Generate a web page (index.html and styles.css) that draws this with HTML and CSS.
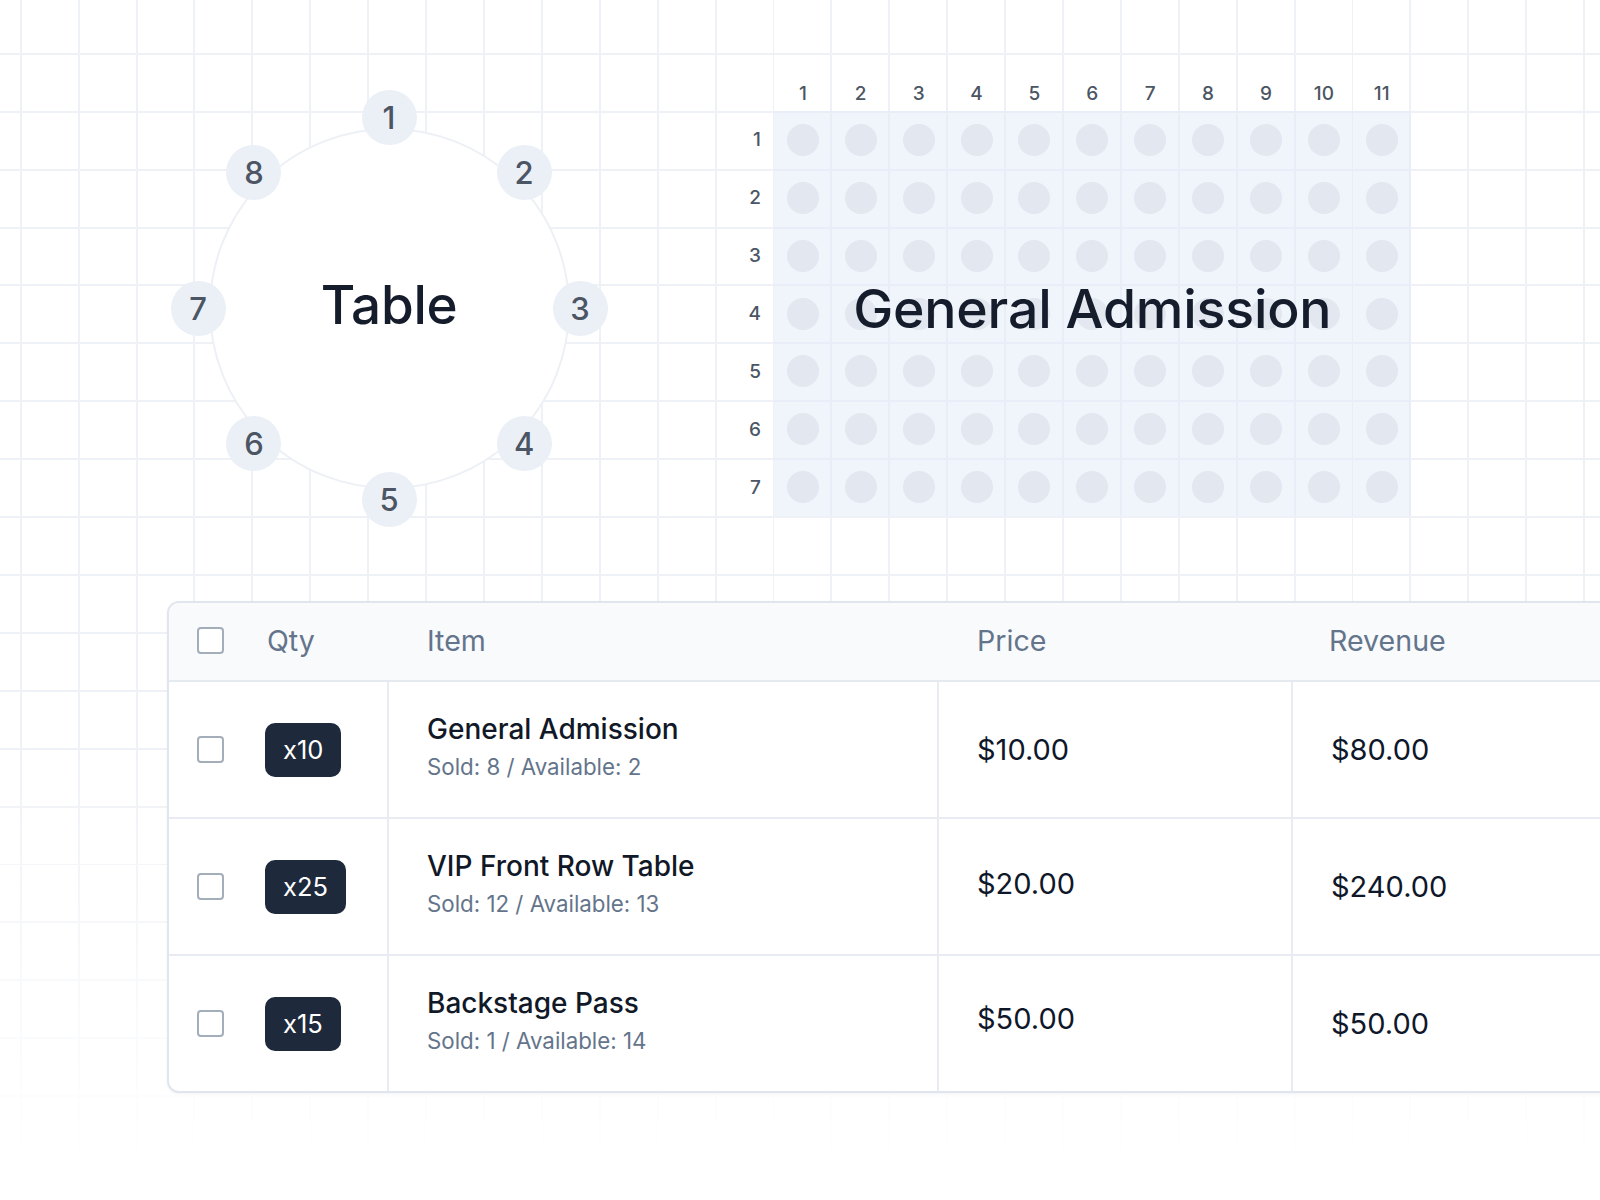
FILE: index.html
```html
<!DOCTYPE html>
<html lang="en">
<head>
<meta charset="utf-8">
<title>Seating & Orders</title>
<link rel="stylesheet" href="styles.css">
</head>
<body>
<div class="canvas">
  <div class="grid-bg"></div>
  <section class="top">
    <div class="round">
      <div class="round-table">Table</div>
      <span class="seat s1">1</span>
      <span class="seat s2">2</span>
      <span class="seat s3">3</span>
      <span class="seat s4">4</span>
      <span class="seat s5">5</span>
      <span class="seat s6">6</span>
      <span class="seat s7">7</span>
      <span class="seat s8">8</span>
    </div>

    <div class="seatmap">
      <div class="cols">
        <span>1</span><span>2</span><span>3</span><span>4</span><span>5</span><span>6</span><span>7</span><span>8</span><span>9</span><span>10</span><span>11</span>
      </div>
      <div class="map-body">
        <div class="rows">
          <span>1</span><span>2</span><span>3</span><span>4</span><span>5</span><span>6</span><span>7</span>
        </div>
        <div class="seats">
          <i></i><i></i><i></i><i></i><i></i><i></i><i></i><i></i><i></i><i></i><i></i>
          <i></i><i></i><i></i><i></i><i></i><i></i><i></i><i></i><i></i><i></i><i></i>
          <i></i><i></i><i></i><i></i><i></i><i></i><i></i><i></i><i></i><i></i><i></i>
          <i></i><i></i><i></i><i></i><i></i><i></i><i></i><i></i><i></i><i></i><i></i>
          <i></i><i></i><i></i><i></i><i></i><i></i><i></i><i></i><i></i><i></i><i></i>
          <i></i><i></i><i></i><i></i><i></i><i></i><i></i><i></i><i></i><i></i><i></i>
          <i></i><i></i><i></i><i></i><i></i><i></i><i></i><i></i><i></i><i></i><i></i>
          <div class="zone-label">General Admission</div>
        </div>
      </div>
    </div>
  </section>

  <section class="orders">
    <div class="orders-head">
      <div class="cell cell-qty"><span class="cb"></span><span>Qty</span></div>
      <div class="cell cell-text">Item</div>
      <div class="cell cell-text">Price</div>
      <div class="cell cell-text head-rev">Revenue</div>
    </div>

    <div class="orders-row">
      <div class="cell cell-qty"><span class="cb"></span><span class="badge">x10</span></div>
      <div class="cell cell-text cell-item">
        <div class="item-name">General Admission</div>
        <div class="item-sub">Sold: 8 / Available: 2</div>
      </div>
      <div class="cell cell-text money">$10.00</div>
      <div class="cell cell-text money">$80.00</div>
    </div>

    <div class="orders-row">
      <div class="cell cell-qty"><span class="cb"></span><span class="badge">x25</span></div>
      <div class="cell cell-text cell-item">
        <div class="item-name">VIP Front Row Table</div>
        <div class="item-sub">Sold: 12 / Available: 13</div>
      </div>
      <div class="cell cell-text money lift-sm">$20.00</div>
      <div class="cell cell-text money">$240.00</div>
    </div>

    <div class="orders-row">
      <div class="cell cell-qty"><span class="cb"></span><span class="badge">x15</span></div>
      <div class="cell cell-text cell-item">
        <div class="item-name">Backstage Pass</div>
        <div class="item-sub">Sold: 1 / Available: 14</div>
      </div>
      <div class="cell cell-text money lift-md">$50.00</div>
      <div class="cell cell-text money">$50.00</div>
    </div>
  </section>
</div>
</body>
</html>
```

FILE: styles.css
```css
* { box-sizing: border-box; }

html, body {
  margin: 0;
  padding: 0;
  background: #ffffff;
}

body {
  width: 1600px;
  height: 1200px;
  overflow: hidden;
  font-family: "Inter", "Noto Sans", "Liberation Sans", sans-serif;
  color: #111827;
}

.canvas {
  position: relative;
  width: 1600px;
  height: 1200px;
  overflow: hidden;
}

.grid-bg {
  position: absolute;
  inset: 0;
  background-image:
    repeating-linear-gradient(to right, transparent 0 19.8px, #eef1f6 19.8px 21.8px, transparent 21.8px 57.9px),
    repeating-linear-gradient(to bottom, transparent 0 52.9px, #eef1f6 52.9px 54.9px, transparent 54.9px 57.9px);
  -webkit-mask-image: linear-gradient(to bottom, #000 0%, #000 62%, rgba(0,0,0,0.35) 85%, transparent 97%);
  mask-image: linear-gradient(to bottom, #000 0%, #000 62%, rgba(0,0,0,0.35) 85%, transparent 97%);
  z-index: 0;
}

/* ---------- top area ---------- */
.top {
  position: relative;
  z-index: 1;
  display: flex;
  align-items: flex-start;
  padding-top: 53px;
}

.round {
  position: relative;
  width: 437px;
  height: 437px;
  margin-left: 170.5px;
  margin-top: 36.5px;
  flex: none;
}

.round-table {
  position: absolute;
  left: 38px;
  top: 38px;
  width: 361px;
  height: 361px;
  border-radius: 50%;
  background: #ffffff;
  border: 2px solid #edf0f5;
  display: flex;
  align-items: center;
  justify-content: center;
  font-size: 53px;
  font-weight: 500;
  color: #151c2b;
  letter-spacing: -0.3px;
  padding-bottom: 6px;
}

.seat {
  position: absolute;
  width: 55px;
  height: 55px;
  border-radius: 50%;
  background: #ebf0f7;
  color: #4b5563;
  font-size: 31px;
  font-weight: 500;
  display: flex;
  align-items: center;
  justify-content: center;
}
.s1 { left: 191px;    top: 0; }
.s2 { left: 326.06px; top: 55.94px; }
.s3 { left: 382px;    top: 191px; }
.s4 { left: 326.06px; top: 326.06px; }
.s5 { left: 191px;    top: 382px; }
.s6 { left: 55.94px;  top: 326.06px; }
.s7 { left: 0;        top: 191px; }
.s8 { left: 55.94px;  top: 55.94px; }

/* ---------- seat map ---------- */
.seatmap {
  margin-left: 108.5px;
  flex: none;
}

.cols {
  display: grid;
  grid-template-columns: repeat(11, 57.9px);
  margin-left: 57.9px;
  height: 57.9px;
  align-items: end;
  padding-bottom: 6px;
}
.cols span,
.rows span {
  font-size: 19px;
  font-weight: 500;
  color: #4b5563;
  text-align: center;
}

.map-body {
  display: flex;
}

.rows {
  width: 57.9px;
  display: grid;
  grid-template-rows: repeat(7, 57.9px);
  align-items: center;
}
.rows span {
  text-align: right;
  padding-right: 13px;
}

.seats {
  position: relative;
  display: grid;
  grid-template-columns: repeat(11, 57.9px);
  grid-template-rows: repeat(7, 57.9px);
  place-items: center;
  background: rgba(226, 234, 248, 0.5);
}
.seats i {
  display: block;
  width: 32px;
  height: 32px;
  border-radius: 50%;
  background: #e2e7f0;
}

.zone-label {
  position: absolute;
  left: 0;
  right: 0;
  top: 166px;
  text-align: center;
  font-size: 53.6px;
  font-weight: 500;
  color: #151c2b;
  letter-spacing: -0.2px;
  line-height: 64px;
}

/* ---------- orders table ---------- */
.orders {
  position: relative;
  z-index: 1;
  margin-top: 74.5px;
  margin-left: 167px;
  width: 1500px;
  background: #ffffff;
  border: 2px solid #e1e6ee;
  border-radius: 12px;
  overflow: hidden;
  box-shadow: 0 1px 3px rgba(15, 23, 42, 0.05);
}

.orders-head,
.orders-row {
  display: grid;
  grid-template-columns: 218px 550px 354px 1fr;
}

.orders-head {
  height: 79px;
  background: #f8fafc;
  border-bottom: 2px solid #e5e9f0;
}

.orders-row {
  height: 137px;
  border-bottom: 2px solid #e8ebf1;
}
.orders-row:last-child {
  height: 135px;
  border-bottom: 0;
}

.cell {
  display: flex;
  align-items: center;
}

.cell-qty {
  padding-left: 28px;
  gap: 41px;
}

.cell-text {
  padding-left: 38px;
  border-left: 2px solid transparent;
}

.orders-row .cell-text {
  border-left-color: #e8ebf1;
}

.orders-head .cell {
  font-size: 28.6px;
  color: #64748b;
  font-weight: 400;
  padding-bottom: 2px;
}
.orders-head .cell-qty span:last-child {
  margin-left: 2px;
}
.orders-head .head-rev {
  padding-left: 36px;
}

.cb {
  display: block;
  width: 27px;
  height: 27px;
  border: 2px solid #a4adba;
  border-radius: 4px;
  background: #ffffff;
  flex: none;
}

.badge {
  display: flex;
  align-items: center;
  justify-content: center;
  height: 54px;
  padding: 0 18px;
  border-radius: 10px;
  background: #1e293b;
  color: #ffffff;
  font-size: 25.5px;
  font-weight: 400;
}

.cell-item {
  flex-direction: column;
  align-items: flex-start;
  justify-content: center;
  gap: 7px;
  padding-bottom: 7px;
}

.item-name {
  font-size: 28px;
  font-weight: 500;
  color: #111827;
  line-height: 34px;
}

.item-sub {
  font-size: 22.3px;
  color: #64748b;
  line-height: 28px;
}

.money {
  font-size: 29px;
  font-weight: 400;
  color: #0f172a;
}

.lift-sm { padding-bottom: 6px; }
.lift-md { padding-bottom: 11px; }
```
